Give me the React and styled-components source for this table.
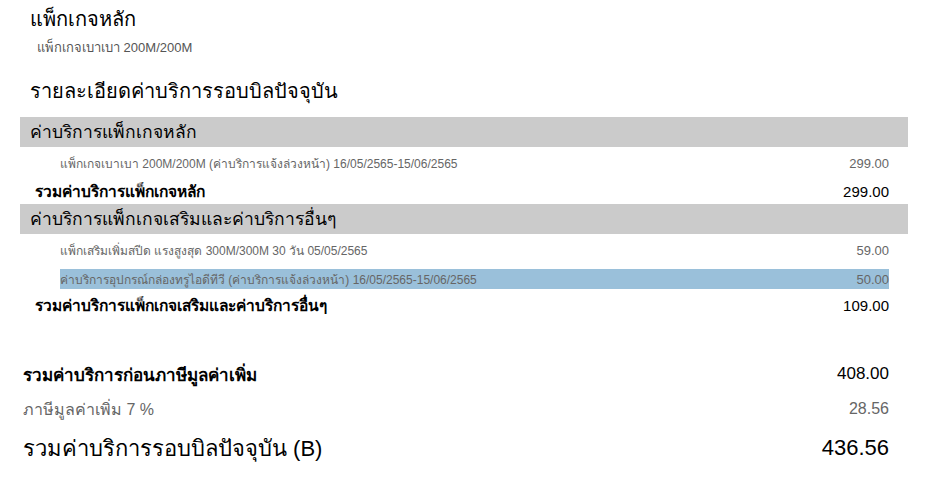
import styled, { createGlobalStyle } from "styled-components";

const GlobalStyle = createGlobalStyle`
  body {
    margin: 0;
    background: #fff;
    font-family: "Liberation Sans", "Noto Sans", sans-serif;
    color: #000;
  }
`;

const Page = styled.div`
  width: 888px;
  padding: 6px 0 0 20px;
`;

const PackageTitle = styled.div`
  font-size: 20px;
  margin-left: 10px;
  line-height: 26px;
`;

const PackageName = styled.div`
  font-size: 13px;
  color: #555;
  margin: 8px 0 0 17px;
  line-height: 16px;
`;

const SectionTitle = styled.div`
  font-size: 20px;
  margin: 22px 0 0 10px;
  line-height: 26px;
`;

const GroupBar = styled.div`
  background: #cbcbcb;
  height: 30px;
  display: flex;
  align-items: center;
  padding-left: 10px;
  font-size: 17.5px;
  margin-top: ${(p) => p.$top || 0}px;
`;

const ItemRow = styled.div`
  display: flex;
  justify-content: space-between;
  align-items: center;
  margin: ${(p) => p.$gap ?? 6}px 19px 0 40px;
  height: 20px;
  font-size: 12px;
  color: #666;
  background: ${(p) => (p.$selected ? "#9ac0da" : "transparent")};
`;

const TotalRow = styled.div`
  display: flex;
  justify-content: space-between;
  align-items: center;
  margin: ${(p) => p.$gap ?? 5}px 19px 0 15px;
  height: 22px;
  font-size: 15.5px;
`;

const Label = styled.span`
  font-weight: 600;
`;

const Amount = styled.span`
  font-size: ${(p) => p.$size || 15}px;
  font-weight: 400;
`;

const Summary = styled.div`
  margin: 41px 19px 0 3px;
  display: flex;
  flex-direction: column;
`;

const SumRow = styled.div`
  display: flex;
  justify-content: space-between;
  align-items: center;
  height: ${(p) => p.$h}px;
  font-size: ${(p) => p.$size}px;
  color: ${(p) => (p.$muted ? "#666" : "#000")};
`;

const App = () => {
  return (
    <>
      <GlobalStyle />
      <Page>
        <PackageTitle>แพ็กเกจหลัก</PackageTitle>
        <PackageName>แพ็กเกจเบาเบา 200M/200M</PackageName>
        <SectionTitle>รายละเอียดค่าบริการรอบบิลปัจจุบัน</SectionTitle>

        <GroupBar $top={13}>ค่าบริการแพ็กเกจหลัก</GroupBar>
        <ItemRow>
          <span>แพ็กเกจเบาเบา 200M/200M (ค่าบริการแจ้งล่วงหน้า) 16/05/2565-15/06/2565</span>
          <Amount $size={13}>299.00</Amount>
        </ItemRow>
        <TotalRow $gap={7}>
          <Label>รวมค่าบริการแพ็กเกจหลัก</Label>
          <Amount>299.00</Amount>
        </TotalRow>

        <GroupBar $top={2}>ค่าบริการแพ็กเกจเสริมและค่าบริการอื่นๆ</GroupBar>
        <ItemRow>
          <span>แพ็กเสริมเพิ่มสปีด แรงสูงสุด 300M/300M 30 วัน 05/05/2565</span>
          <Amount $size={13}>59.00</Amount>
        </ItemRow>
        <ItemRow $selected $gap={9}>
          <span>ค่าบริการอุปกรณ์กล่องทรูไอดีทีวี (ค่าบริการแจ้งล่วงหน้า) 16/05/2565-15/06/2565</span>
          <Amount $size={13}>50.00</Amount>
        </ItemRow>
        <TotalRow>
          <Label>รวมค่าบริการแพ็กเกจเสริมและค่าบริการอื่นๆ</Label>
          <Amount>109.00</Amount>
        </TotalRow>

        <Summary>
          <SumRow $h={34} $size={17}>
            <Label>รวมค่าบริการก่อนภาษีมูลค่าเพิ่ม</Label>
            <Amount $size={17}>408.00</Amount>
          </SumRow>
          <SumRow $h={36} $size={16} $muted>
            <span>ภาษีมูลค่าเพิ่ม 7 %</span>
            <span>28.56</span>
          </SumRow>
          <SumRow $h={42} $size={22}>
            <span>รวมค่าบริการรอบบิลปัจจุบัน (B)</span>
            <span>436.56</span>
          </SumRow>
        </Summary>
      </Page>
    </>
  );
};

export default App;
